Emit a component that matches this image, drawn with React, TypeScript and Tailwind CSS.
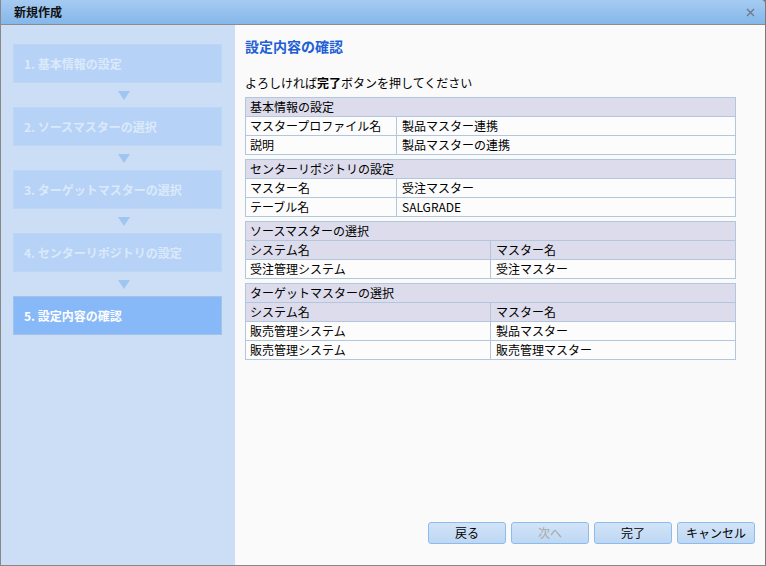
import React from "react";

const font = { fontFamily: '"Noto Sans CJK JP", "Noto Sans", sans-serif' };

const steps = [
  "1. 基本情報の設定",
  "2. ソースマスターの選択",
  "3. ターゲットマスターの選択",
  "4. センターリポジトリの設定",
  "5. 設定内容の確認",
];

function Arrow() {
  return (
    <div className="flex h-[24px] items-center justify-center">
      <svg width="12" height="9" viewBox="0 0 12 9">
        <polygon points="0,0 12,0 6,9" fill="#9fc6f1" />
      </svg>
    </div>
  );
}

function TwoCol({ title, rows }: { title: string; rows: [string, string][] }) {
  return (
    <div className="border border-[#b3c7dc] mb-[4px]">
      <div className="h-[18px] bg-[#dcdcec] px-[4px] leading-[18px]">{title}</div>
      {rows.map((r, i) => (
        <div key={i} className="flex h-[19px] border-t border-[#b3c7dc] leading-[18px] bg-[#fcfcfc]">
          <div className="w-[151px] border-r border-[#b3c7dc] px-[4px]">{r[0]}</div>
          <div className="flex-1 px-[5px]">{r[1]}</div>
        </div>
      ))}
    </div>
  );
}

function Grid({ title, rows }: { title: string; rows: [string, string][] }) {
  return (
    <div className="border border-[#b3c7dc] mb-[4px]">
      <div className="h-[18px] bg-[#dcdcec] px-[4px] leading-[18px]">{title}</div>
      <div className="flex h-[19px] border-t border-[#b3c7dc] leading-[18px] bg-[#dcdcec]">
        <div className="w-[245px] border-r border-[#b3c7dc] px-[4px]">システム名</div>
        <div className="flex-1 px-[5px]">マスター名</div>
      </div>
      {rows.map((r, i) => (
        <div key={i} className="flex h-[19px] border-t border-[#b3c7dc] leading-[18px] bg-[#fcfcfc]">
          <div className="w-[245px] border-r border-[#b3c7dc] px-[4px]">{r[0]}</div>
          <div className="flex-1 px-[5px]">{r[1]}</div>
        </div>
      ))}
    </div>
  );
}

function Btn({ children, disabled }: { children: React.ReactNode; disabled?: boolean }) {
  return (
    <div
      className={
        "flex h-[22px] w-[78px] items-center justify-center rounded-[3px] border border-[#8dbbee] bg-gradient-to-b from-[#d2e4f7] to-[#bdd7f3] text-[12px] " +
        (disabled ? "text-[#a8a8a8]" : "text-black")
      }
    >
      {children}
    </div>
  );
}

export default function App() {
  return (
    <div className="h-[566px] w-[766px] bg-[#7a7a7a] text-[12px] text-black" style={font}>
      <div className="flex h-[566px] w-[766px] flex-col border-l border-b border-[#888888]">
        <div className="flex h-[25px] w-[764px] items-center justify-between rounded-tr-[4px] border-b border-[#8c8c8c] bg-gradient-to-b from-[#a6cbf1] to-[#84b7ea] pl-[13px] pr-[10px]">
          <span className="font-bold text-[12px] text-[#111]">新規作成</span>
          <svg width="9" height="9" viewBox="0 0 9 9">
            <path d="M1 1 L8 8 M8 1 L1 8" stroke="#6e7a88" strokeWidth="1.4" />
          </svg>
        </div>
        <div className="flex flex-1 w-[764px]">
          <div className="w-[234px] bg-[#cbdef5] pl-[12px] pt-[19px]">
            {steps.map((s, i) => (
              <div key={i}>
                <div
                  className={
                    "flex h-[39px] w-[209px] items-center pl-[10px] font-bold text-[12px] border " +
                    (i === 4
                      ? "bg-[#87b9f8] border-[#a3c3e6] text-white"
                      : "bg-[#b6d3f7] border-[#bcd6f5] text-[#dbe9fa]")
                  }
                >
                  {s}
                </div>
                {i < 4 && <Arrow />}
              </div>
            ))}
          </div>
          <div className="flex flex-1 flex-col bg-[#fafafa] pl-[10px] pr-[29px]">
            <div className="mt-[11px] h-[20px] text-[14px] font-bold leading-[20px] text-[#1e5fd6]">設定内容の確認</div>
            <div className="mt-[19px] h-[16px] leading-[16px]">
              よろしければ<span className="font-bold">完了</span>ボタンを押してください
            </div>
            <div className="mt-[6px]">
              <TwoCol
                title="基本情報の設定"
                rows={[
                  ["マスタープロファイル名", "製品マスター連携"],
                  ["説明", "製品マスターの連携"],
                ]}
              />
              <TwoCol
                title="センターリポジトリの設定"
                rows={[
                  ["マスター名", "受注マスター"],
                  ["テーブル名", "SALGRADE"],
                ]}
              />
              <Grid title="ソースマスターの選択" rows={[["受注管理システム", "受注マスター"]]} />
              <Grid
                title="ターゲットマスターの選択"
                rows={[
                  ["販売管理システム", "製品マスター"],
                  ["販売管理システム", "販売管理マスター"],
                ]}
              />
            </div>
            <div className="flex-1" />
            <div className="mb-[21px] mr-[-19px] flex justify-end gap-[5px]">
              <Btn>戻る</Btn>
              <Btn disabled>次へ</Btn>
              <Btn>完了</Btn>
              <Btn>キャンセル</Btn>
            </div>
          </div>
        </div>
      </div>
    </div>
  );
}
